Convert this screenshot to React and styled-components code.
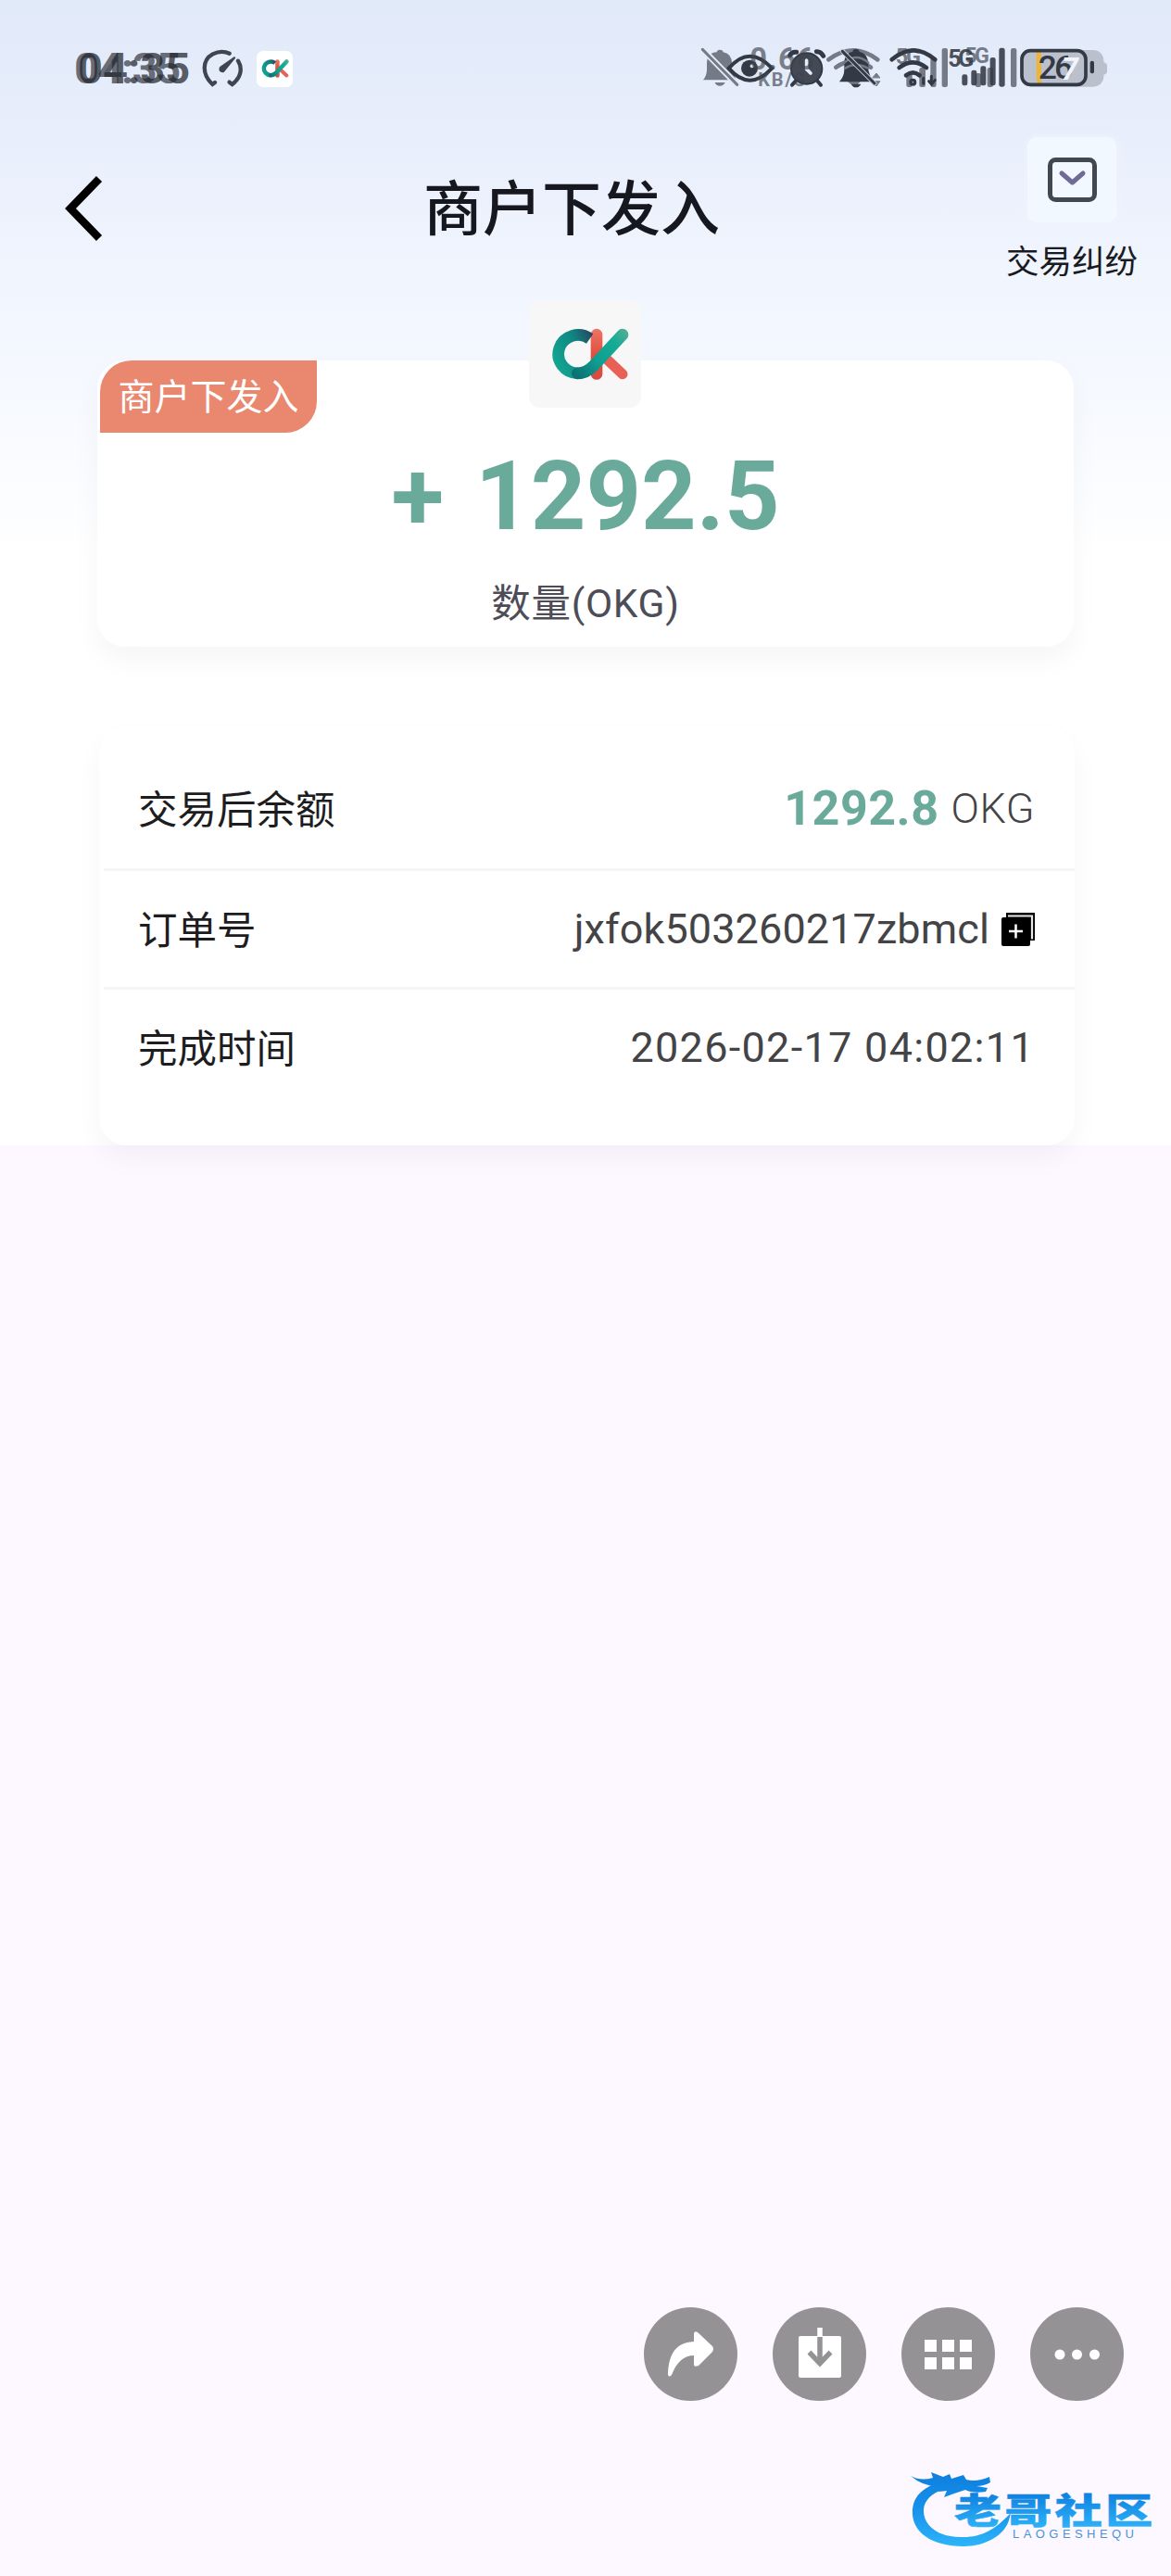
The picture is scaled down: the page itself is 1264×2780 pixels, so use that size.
import styled, { createGlobalStyle } from 'styled-components'


const orderRows = [
    { label: '交易后余额', amount: '1292.8', unit: 'OKG' },
    { label: '订单号', value: 'jxfok503260217zbmcl', spacing: 0.1, copy: true },
    { label: '完成时间', value: '2026-02-17 04:02:11', spacing: 1.3 },
]


function OkLogo({ width, height }) {
    return (
        <svg width={width} height={height} viewBox='165 128 252 170' fill='none' strokeLinecap='round'>
            <defs>
                <linearGradient id='teal' x1='240' y1='280' x2='410' y2='140' gradientUnits='userSpaceOnUse'>
                    <stop offset='0' stopColor='#0b6f74' />
                    <stop offset='0.4' stopColor='#0f9f90' />
                    <stop offset='0.75' stopColor='#12ab96' />
                    <stop offset='1' stopColor='#4fae94' />
                </linearGradient>
                <linearGradient id='ring' x1='170' y1='210' x2='295' y2='150' gradientUnits='userSpaceOnUse'>
                    <stop offset='0' stopColor='#12a391' />
                    <stop offset='0.6' stopColor='#0f8582' />
                    <stop offset='1' stopColor='#274b63' />
                </linearGradient>
                <linearGradient id='red' x1='0' y1='130' x2='0' y2='295' gradientUnits='userSpaceOnUse'>
                    <stop offset='0' stopColor='#ee7468' />
                    <stop offset='0.5' stopColor='#e0503f' />
                    <stop offset='1' stopColor='#d94a43' />
                </linearGradient>
            </defs>
            <path d='M342 226L396 277' stroke='#e96156' strokeWidth='33' />
            <path d='M312 149V276' stroke='url(#red)' strokeWidth='38' />
            <path d='M290 162A64 62 0 1 0 252 274' stroke='url(#ring)' strokeWidth='38' strokeLinecap='butt' />
            <path d='M250 274Q280 274 304 248L396 149' stroke='url(#teal)' strokeWidth='38' />
        </svg>
    )
}


function GaugeIcon() {
    return (
        <svg width='46' height='42' viewBox='472 70 138 126' fill='none' stroke='#3f4651' strokeLinecap='round'>
            <path d='M517 178L509 184C474 152 475 105 510 86Q538 72 564 84' strokeWidth='13' />
            <path d='M592 108C608 134 600 164 573 184L564 177' strokeWidth='13' />
            <path d='M580 98L535 130Q530 143 544 142Z' strokeWidth='7' strokeLinejoin='round' fill='#3f4651' />
        </svg>
    )
}


function Signals() {
    const grey = '#747a86'
    const dark = '#333a45'
    return (
        <svg width='470' height='90' viewBox='0 0 1410 270' fill='none' strokeLinecap='round' fontFamily='Roboto, sans-serif' fontWeight='700'>
            {/* muted bell */}
            <g fill={grey}>
                <path d='M57 172Q69 158 69 138V119Q69 84 101 82Q102 74 111 74Q121 74 122 82Q151 87 151 122V140L164 172Z' />
                <path d='M95 180H128Q123 191 111 191Q99 191 95 180Z' />
                <path d='M55 73L167 187' stroke='#e4ebf9' strokeWidth='20' />
                <path d='M55 73L167 187' stroke={grey} strokeWidth='9' />
            </g>

            {/* eye comfort */}
            <path d='M140 134Q207 56 280 134Q207 212 140 134Z' fill='#dfe7f2' stroke={dark} strokeWidth='12' />
            <circle cx='207' cy='134' r='27' fill={dark} />
            <circle cx='215' cy='127' r='6' fill='#dfe7f2' />

            {/* alarm */}
            <g stroke={dark}>
                <path d='M338 92Q344 80 359 82M424 80Q438 79 446 94' strokeWidth='15' />
                <path d='M356 176L345 188M428 176L438 188' strokeWidth='12' />
                <circle cx='392' cy='135' r='50' fill='#444a55' strokeWidth='6' />
                <path d='M392 108V137L405 150' stroke='#e4ebf9' strokeWidth='11' />
            </g>

            {/* network speed */}
            <g fill='#3f4550' opacity='0.65'>
                <text x='208' y='138' fontSize='98' textLength='208'>0.66</text>
                <text x='235' y='192' fontSize='60' textLength='152'>KB/S</text>
            </g>

            {/* wifi behind the second bell */}
            <g stroke={grey} strokeWidth='14'>
                <path d='M463 106Q543 46 622 106M487 131Q543 92 600 131' />
                <path d='M520 170Q545 150 570 170L548 194Z' fill={grey} strokeWidth='4' />
                <path d='M606 164L618 150L629 164ZM606 177L618 192L629 177Z' fill={grey} strokeWidth='3' />
            </g>
            <g fill={dark}>
                <path d='M498 178Q514 160 514 138V119Q514 84 541 80Q543 71 552 71Q561 71 563 80Q592 86 592 122V140L604 178Z' />
                <path d='M514 116Q552 82 592 116M516 134Q552 112 592 134' stroke={grey} strokeWidth='7' />
                <path d='M537 185H568Q563 196 552 196Q541 196 537 185Z' />
                <path d='M508 79L612 183' stroke='#c3cad6' strokeWidth='15' />
                <path d='M508 79L612 183' stroke={dark} strokeWidth='9' />
            </g>

            {/* sim 1 */}
            <g fill={grey}>
                <text x='680' y='121' fontSize='70' textLength='82'>5G</text>
                <rect x='715' y='150' width='19' height='45' rx='7' />
                <rect x='757' y='132' width='20' height='63' rx='7' />
                <rect x='793' y='100' width='19' height='95' rx='7' />
                <rect x='830' y='69' width='19' height='126' rx='7' />
            </g>
            <g stroke={dark} strokeWidth='14'>
                <path d='M668 106Q738 46 808 106' />
                <path d='M692 132Q736 98 780 132' />
                <path d='M714 157Q736 139 758 157' />
                <circle cx='736' cy='179' r='5' />
                <path d='M770 166V184M796 160V184M788 176L797 186L808 172' strokeWidth='9' />
            </g>

            {/* sim 2 */}
            <g fill={grey}>
                <text x='904' y='118' fontSize='70' textLength='80'>5G</text>
                <rect x='938' y='150' width='19' height='45' rx='7' />
                <rect x='977' y='132' width='19' height='63' rx='7' />
                <rect x='1053' y='69' width='19' height='126' rx='7' />
            </g>
            <g fill={dark} opacity='0.88'>
                <text x='850' y='128' fontSize='76' textLength='84'>5G</text>
                <rect x='895' y='154' width='18' height='36' rx='7' />
                <rect x='925' y='140' width='18' height='50' rx='7' />
                <rect x='955' y='127' width='18' height='63' rx='7' />
                <rect x='986' y='99' width='18' height='91' rx='7' />
                <rect x='1015' y='68' width='19' height='126' rx='7' />
            </g>

            {/* battery */}
            <rect x='1086' y='75' width='268' height='119' rx='34' fill='#bac1cd' />
            <path d='M1350 114Q1365 116 1365 126V144Q1365 154 1350 156Z' fill='#bac1cd' />
            <path d='M1136 80H1152V188H1144Q1136 180 1136 160Z' fill='#e9b53e' />
            <rect x='1089' y='77' width='207' height='110' rx='28' stroke={dark} strokeWidth='11' />
            <rect x='1310' y='110' width='13' height='41' rx='6' fill={dark} />
            <text x='1142' y='168' fontSize='106' textLength='112' fontWeight='500' fill={dark}>26</text>
            <text x='1217' y='170' fontSize='98' fontStyle='italic' fill='#f1f4fa'>7</text>
        </svg>
    )
}


function DisputeIcon() {
    return (
        <svg width='53' height='48' viewBox='0 0 53 48' fill='none' strokeLinecap='round' strokeLinejoin='round'>
            <rect x='2.5' y='2.5' width='48' height='43' rx='6' stroke='#42484f' strokeWidth='5' />
            <path d='M15 17L26.5 27L38 17' stroke='#706b96' strokeWidth='5' />
        </svg>
    )
}


function CopyIcon() {
    return (
        <svg width='36' height='36' viewBox='0 0 36 36'>
            <path d='M5 0H36V30H30V5H5Z' fill='#000' />
            <path d='M7 3.500H33V28.500' fill='none' stroke='#e8e8e8' strokeWidth='2.200' />
            <rect x='0' y='5' width='31' height='31' rx='2' fill='#000' />
            <path d='M15.500 12.500V27.500M8 20H23' stroke='#fff' strokeWidth='2.500' />
        </svg>
    )
}


function Watermark() {
    return (
        <svg width='274' height='92' viewBox='0 0 274 92'>
            <defs>
                <linearGradient id='sky' x1='0' y1='5' x2='0' y2='84' gradientUnits='userSpaceOnUse'>
                    <stop offset='0' stopColor='#0f7fdf' />
                    <stop offset='0.45' stopColor='#1590ea' />
                    <stop offset='1' stopColor='#2cb4f8' />
                </linearGradient>
                <linearGradient id='skyText' x1='0' y1='-32' x2='0' y2='3' gradientUnits='userSpaceOnUse'>
                    <stop offset='0' stopColor='#0f80df' />
                    <stop offset='1' stopColor='#2bb0f7' />
                </linearGradient>
            </defs>
            <g fill='url(#sky)'>
                <path d='M36 14C12 20 2 32 3 50C5 72 28 84 58 84C82 84 102 72 107 56L109 48C92 66 78 74 58 74C32 75 14 62 15 44C16 32 27 25 42 20Z' />
                <path d='M1 8Q12 14 25 10L23 4L36 9L43 6L45 11L58 7L61 12Q72 15 86 9L87 15Q80 19 72 19L84 21L82 25Q68 27 60 23L48 27L37 31L40 24L31 25L35 19Q16 21 1 8Z' />
            </g>
            <g fill='url(#skyText)' stroke='url(#skyText)' fontFamily='"Noto Sans CJK SC", sans-serif' fontWeight='900'>
                <text x='0' y='0' fontSize='38' transform='translate(48 59) scale(1.34 1)' letterSpacing='2.600' strokeWidth='0.6'>老哥社区</text>
            </g>
            <text x='111' y='75' fontSize='13' textLength='131' fill='#4b93d6' fontFamily='"Liberation Sans", sans-serif'>LAOGESHEQU</text>
        </svg>
    )
}


function App() {
    return (
        <Screen>
            <GlobalStyle />

            <Backdrop>
                <StatusBar>
                    <Clock>
                        <span>04:35</span>
                        <ClockGhost>04:35</ClockGhost>
                    </Clock>
                    <GaugeIcon />
                    <AppBadge><OkLogo width={30} height={20} /></AppBadge>
                    <SignalArea><Signals /></SignalArea>
                </StatusBar>

                <Header>
                    <BackButton>
                        <svg width='42' height='70' viewBox='0 0 42 70' fill='none'>
                            <path d='M38 3L7 35L38 67' stroke='#000' strokeWidth='8.500' />
                        </svg>
                    </BackButton>
                    <Title>商户下发入</Title>
                    <Dispute>
                        <DisputeTile><DisputeIcon /></DisputeTile>
                        <DisputeLabel>交易纠纷</DisputeLabel>
                    </Dispute>
                </Header>

                <AmountCard>
                    <Tag>商户下发入</Tag>
                    <LogoTile><OkLogo width={84} height={57} /></LogoTile>
                    <Amount><span>+</span>1292.5</Amount>
                    <AmountLabel>数量(OKG)</AmountLabel>
                </AmountCard>

                <DetailCard>
                    {orderRows.map((row) => (
                        <Row key={row.label}>
                            <RowLabel>{row.label}</RowLabel>
                            {row.amount ? (
                                <RowValue>
                                    <Balance>{row.amount}</Balance>
                                    <Unit>{row.unit}</Unit>
                                </RowValue>
                            ) : (
                                <RowValue $spacing={row.spacing}>
                                    {row.value}
                                    {row.copy && <CopyIcon />}
                                </RowValue>
                            )}
                        </Row>
                    ))}
                </DetailCard>
            </Backdrop>

            <Actions>
                <RoundButton>
                    <svg width='101' height='101' viewBox='0 0 101 101' fill='#fff'>
                        <path d='M54 29Q54 25 58 27L74 42Q76 45 74 48L59 63Q54 65 54 62V52Q38 52 30 73Q26 77 26 71Q27 38 54 37Z' />
                    </svg>
                </RoundButton>
                <RoundButton>
                    <svg width='101' height='101' viewBox='0 0 101 101' fill='none'>
                        <rect x='28' y='31' width='46' height='45' rx='2' fill='#fff' />
                        <path d='M51 22V32' stroke='#fff' strokeWidth='5.500' />
                        <path d='M51 32V60M39.500 48.500L51 60.500L62.500 48.500' stroke='#959295' strokeWidth='5.500' />
                    </svg>
                </RoundButton>
                <RoundButton>
                    <svg width='101' height='101' viewBox='0 0 101 101' fill='#fff'>
                        {[35, 54].map((y) => [25, 44, 63].map((x) => (
                            <rect key={`${x}-${y}`} x={x} y={y} width='13' height='13' />
                        )))}
                    </svg>
                </RoundButton>
                <RoundButton>
                    <svg width='101' height='101' viewBox='0 0 101 101' fill='#fff'>
                        <circle cx='32' cy='51' r='5.500' />
                        <circle cx='50.500' cy='51' r='5.500' />
                        <circle cx='69.500' cy='51' r='5.500' />
                    </svg>
                </RoundButton>
            </Actions>

            <Footer><Watermark /></Footer>
        </Screen>
    )
}

const GlobalStyle = createGlobalStyle`
    * {
        box-sizing: border-box;
    }

    body {
        margin: 0;
        background: #fdf7ff;
        font-family: 'Open Sans', 'Noto Sans CJK SC', sans-serif;
    }

    svg {
        display: block;
        flex-shrink: 0;
    }
`

const Screen = styled.div`
    display: flex;
    flex-direction: column;
    width: 1264px;
    height: 2780px;
    background: #fdf7ff;
    overflow: hidden;
`

const Backdrop = styled.div`
    height: 1236px;
    background: linear-gradient(#e1eaf9 0px, #e7edfb 130px, #f0f5fe 290px, #f5f8ff 400px, #ffffff 600px);
`

const StatusBar = styled.div`
    display: flex;
    align-items: center;
    height: 148px;
    padding-left: 80px;
`

const Clock = styled.div`
    position: relative;
    width: 137px;
    font-family: Roboto, sans-serif;
    font-size: 47px;
    font-weight: 700;
    line-height: 56px;
    letter-spacing: -1.5px;
    color: rgba(62, 67, 78, 0.75);
`

const ClockGhost = styled.span`
    position: absolute;
    left: 4px;
    top: 0;
    letter-spacing: 0;
    color: rgba(32, 36, 44, 0.72);
`

const AppBadge = styled.div`
    display: flex;
    align-items: center;
    justify-content: center;
    width: 39px;
    height: 39px;
    margin-left: 14px;
    border-radius: 7px;
    background: #fff;
`

const SignalArea = styled.div`
    margin-left: auto;
    margin-right: 54px;
`

const Header = styled.header`
    display: grid;
    grid-template-columns: 457px 1fr 178px;
    height: 241px;
`

const BackButton = styled.div`
    padding: 42px 0 0 69px;
`

const Title = styled.h1`
    margin: 0;
    padding-top: 29px;
    font-size: 64px;
    font-weight: 500;
    line-height: 94px;
    color: #17181f;
`

const Dispute = styled.div`
    display: flex;
    flex-direction: column;
    align-items: center;
    width: 142px;
`

const DisputeTile = styled.div`
    display: flex;
    align-items: center;
    justify-content: center;
    width: 96px;
    height: 92px;
    border-radius: 10px;
    background: #f2f8ff;
    box-shadow: 0 0 10px #f0f5ff;
`

const DisputeLabel = styled.div`
    margin-top: 15px;
    font-size: 35.5px;
    line-height: 52px;
    white-space: nowrap;
    color: #191b23;
`

const AmountCard = styled.section`
    position: relative;
    display: flex;
    flex-direction: column;
    align-items: center;
    width: 1054px;
    height: 309px;
    margin: 0 auto;
    border-radius: 30px;
    background: #fff;
    box-shadow: 0 14px 30px rgba(0, 0, 0, 0.04);
`

const Tag = styled.div`
    position: absolute;
    left: 3px;
    top: 0;
    width: 234px;
    height: 78px;
    border-radius: 34px 0 34px 0;
    background: #e9876f;
    font-size: 39px;
    line-height: 76px;
    text-align: center;
    color: #fff;
`

const LogoTile = styled.div`
    position: absolute;
    left: 466px;
    top: -65px;
    display: flex;
    align-items: center;
    justify-content: center;
    width: 121px;
    height: 116px;
    padding-left: 11px;
    border-radius: 12px;
    background: #f7f7f7;
`

const Amount = styled.div`
    display: flex;
    margin-top: 92px;
    gap: 34px;
    font-family: Roboto, sans-serif;
    font-size: 104px;
    font-weight: 700;
    line-height: 110px;
    color: #6aaa9a;
`

const AmountLabel = styled.div`
    margin-top: 29px;
    font-family: Roboto, 'Noto Sans CJK SC', sans-serif;
    font-size: 42.5px;
    line-height: 64px;
    letter-spacing: 0.7px;
    color: #4d4c57;
`

const DetailCard = styled.section`
    width: 1053px;
    height: 452px;
    margin: 86px auto 0 107px;
    padding-top: 25px;
    border-radius: 30px;
    background: #fff;
    box-shadow: 0 14px 30px rgba(0, 0, 0, 0.04);
`

const Row = styled.div`
    display: flex;
    align-items: center;
    justify-content: space-between;
    height: 128px;
    margin-left: 5px;
    padding: 0 43px 0 37px;

    & + & {
        border-top: 3px solid #f5f5f5;
    }
`

const RowLabel = styled.div`
    font-size: 42.5px;
    line-height: 60px;
    color: #1d1d1f;
`

const RowValue = styled.div`
    display: flex;
    align-items: center;
    gap: 13px;
    font-family: Roboto, sans-serif;
    font-size: 45px;
    line-height: 60px;
    letter-spacing: ${props => props.$spacing || 0}px;
    white-space: pre;
    color: #444446;
`

const Balance = styled.span`
    font-size: 52px;
    font-weight: 700;
    letter-spacing: 0.5px;
    color: #6aaa9a;
`

const Unit = styled.span`
    font-weight: 300;
    letter-spacing: 0.5px;
`

const Actions = styled.div`
    display: flex;
    gap: 38px;
    margin-top: 1254px;
    padding-left: 695px;
`

const RoundButton = styled.div`
    width: 101px;
    height: 101px;
    border-radius: 50%;
    background: #959295;
`

const Footer = styled.div`
    display: flex;
    justify-content: flex-end;
    margin-top: 73px;
    padding-right: 8px;
`

export default App
